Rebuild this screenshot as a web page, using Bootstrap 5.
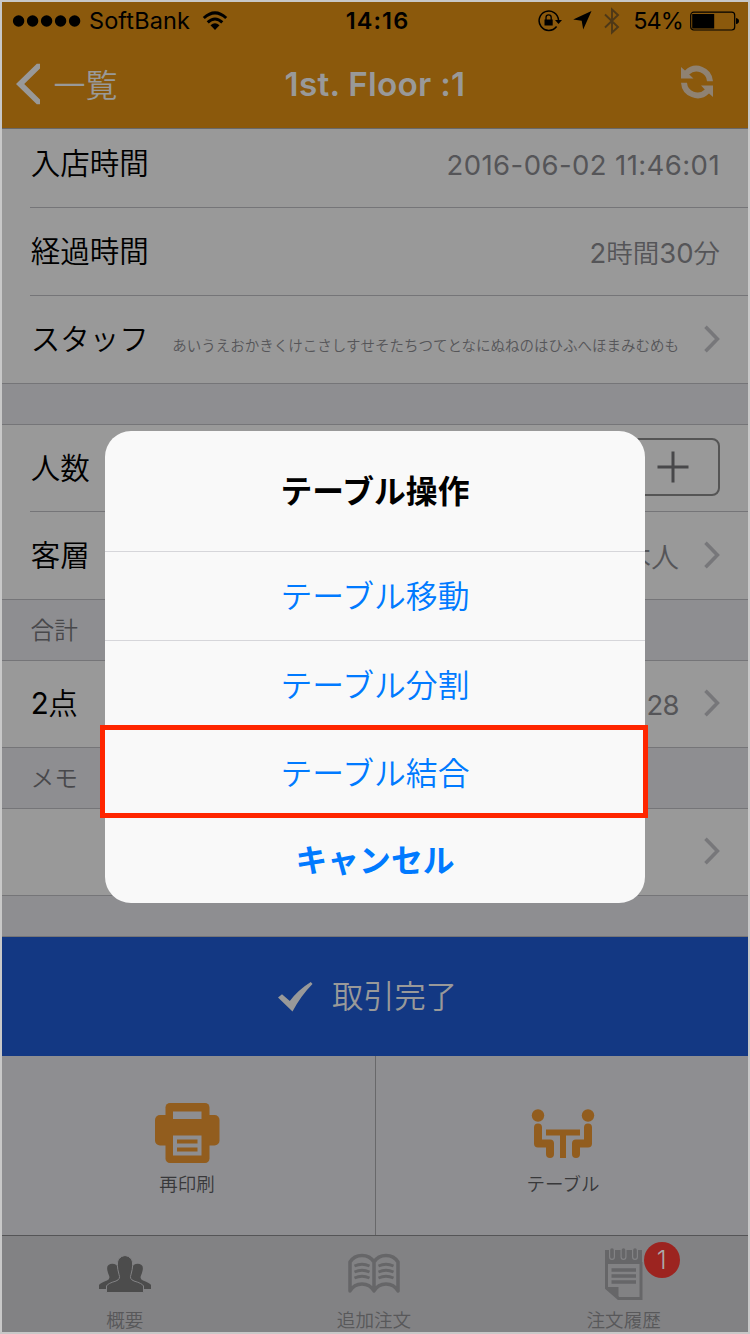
<!DOCTYPE html>
<html lang="ja">
<head>
<meta charset="utf-8">
<meta name="viewport" content="width=device-width, initial-scale=1">
<title>1st. Floor :1</title>
<link href="https://cdn.jsdelivr.net/npm/bootstrap@5.3.0/dist/css/bootstrap.min.css" rel="stylesheet">
<style>
  body { font-family: Inter, "Noto Sans CJK JP", sans-serif; font-weight: 400; line-height: 1; color: #000; background: #999; }
  .phone { width: 750px; height: 1334px; border: 2px solid #c8c8c8; background: #8e8e91; }
  svg { display: block; flex: none; }
  .jp { font-family: "Noto Sans CJK JP DemiLight", "Noto Sans CJK JP", sans-serif; font-weight: 350; }
  .topbar { height: 127px; background: #8b590c; border-bottom: 1px solid #68686a; }
  .tri { display: grid; grid-template-columns: 1fr auto 1fr; align-items: center; }
  .status { height: 37px; font-size: 24px; }
  .carrier { margin-left: 8px; font-size: 23.5px; letter-spacing: .1px; }
  .clock { font-weight: 600; font-size: 23.5px; letter-spacing: 1.1px; padding-left: 5px; }
  .titlebar { height: 89px; color: #999; }
  .backtext { font-size: 32px; margin-left: 12.5px; padding-bottom: 1px; }
  .screen-title { font-size: 33.3px; font-weight: 600; letter-spacing: .25px; padding-top: 2px; }
  .cells { background: #999; border-bottom: 1px solid #757578; }
  .cell { height: 88px; margin-left: 28px; padding-right: 28px; border-bottom: 1px solid #757578; }
  .cell:last-child { height: 87px; border-bottom: 0; }
  .cell.first { height: 79px; padding-bottom: 9px; }
  .cells-b .cell:first-child { height: 87px; }
  .lbl { font-size: 29.5px; padding-bottom: 3px; margin-left: .7px; }
  .val { font-size: 27.5px; color: #555558; padding-top: 3px; }
  .val.stamp { letter-spacing: .42px; padding-top: 5px; }
  .val .jp { font-size: 26.5px; }
  .val .who { font-size: 28px; }
  .staff { font-size: 14.5px; padding-top: 11px; margin-left: auto; }
  .chev { margin-left: 25px; margin-bottom: 2px; }
  .gap-row { height: 41px; border-bottom: 1px solid #757578; }
  .head-row { height: 61px; padding-left: 28.5px; font-size: 23.7px; color: #48484b; border-bottom: 1px solid #757578; }
  .stepper { width: 188px; height: 58px; border: 2px solid #555; border-radius: 8px; margin-top: -3px; }
  .complete { height: 119px; background: #133883; color: #999; font-size: 31.3px; padding-right: 15px; }
  .complete span { padding-bottom: 3px; }
  .tools { height: 180px; border-bottom: 1px solid #555557; }
  .tool { font-size: 18.5px; color: #38383a; padding-top: 47px; }
  .tool:first-child { padding-right: 3px; }
  .tool + .tool { border-left: 1px solid #68686a; padding-left: 2px; }
  .tool span { margin-top: 10px; }
  .tabs { height: 96px; background: #828284; font-size: 18.6px; color: #58585a; }
  .tab-item { padding-top: 12px; }
  .tab-item:first-child { padding-right: 3px; }
  .tab-item:nth-child(2) { padding-right: 2px; }
  .tab-item svg { height: 52px; }
  .tab-item > span { margin-top: 10px; }
  .count { position: absolute; left: 39px; top: -6px; width: 36px; height: 36px; border-radius: 50%; background: #9c2420; color: #aaa; font: 300 25px/36px Inter, sans-serif; text-align: center; }
  .dialog { position: absolute; left: 105px; top: 431px; width: 540px; height: 472px; border-radius: 26px; background: #f9f9f9; font-size: 31.8px; color: #007aff; }
  .dialog > div { height: 88px; flex: none; padding-bottom: 2px; }
  .dialog .dlg-title { height: 121px; color: #000; font-weight: 700; border-bottom: 1px solid #d6d6da; }
  .dialog .ruled { height: 89px; border-bottom: 1px solid #d6d6da; }
  .dialog .strong { font-family: "Noto Sans CJK JP", sans-serif; font-weight: 700; }
  .dialog .cancel { height: 86px; }
  .marker { position: absolute; left: -5px; top: 294px; width: 548px; border: 5.5px solid #ff2600; }
  .dialog > .marker { height: 93px; }
</style>
</head>
<body>
<svg width="0" height="0" class="position-absolute">
  <symbol id="chev" viewBox="0 0 16 28"><path d="M1.5 1.8 13.4 14 1.5 26.2" fill="none" stroke="#77777a" stroke-width="3.6"/></symbol>
</svg>
<div class="phone position-relative overflow-hidden">
  <header class="topbar">
    <div class="status tri">
      <div class="d-flex align-items-center">
        <svg width="71" height="12" class="ms-2" viewBox="-3 0 71 12"><circle cx="5.6" cy="6" r="5.7"/><circle cx="19.6" cy="6" r="5.7"/><circle cx="33.6" cy="6" r="5.7"/><circle cx="47.6" cy="6" r="5.7"/><circle cx="61.6" cy="6" r="5.7"/></svg>
        <span class="carrier">SoftBank</span>
        <svg width="26" height="20" viewBox="0 0 26 20" style="margin-left:12px"><g fill="none" stroke="#000" stroke-width="3"><path d="M1.8 7Q13-3.2 24.2 7"/><path d="M5.7 11.4Q13 4.6 20.3 11.4"/></g><path d="M8.5 14.3Q13 10.2 17.5 14.3L13 19Z"/></svg>
      </div>
      <span class="clock">14:16</span>
      <div class="d-flex align-items-center justify-content-end">
        <svg width="24" height="22" viewBox="0 0 24 22"><path d="M18.6 16.500A9.700 9.700 0 1 1 20.500 10" fill="none" stroke="#000" stroke-width="1.500"/><path d="M17 10h7l-3.500 4Z"/><path d="M6.500 9.500h8.200v6H6.500Z"/><path d="M8 10V7.500a2.600 2.600 0 0 1 5.200 0V10" fill="none" stroke="#000" stroke-width="1.300"/></svg>
        <svg width="19" height="19" viewBox="0 0 19 19" style="margin-left:11px"><path d="M18.500 0 .2 8.500l8.500 1.300 1.500 8.700Z"/></svg>
        <svg width="16" height="28" viewBox="0 0 16 28" style="margin-left:12px"><path d="M1 7.500 14 20 8 25.500V2.500L14 8 1 20.500" fill="none" stroke="#4e3817" stroke-width="1.900"/></svg>
        <span style="margin-left:13px;font-size:23.500px;letter-spacing:-.9px">54%</span>
        <svg width="49" height="20" viewBox="0 0 49 20" style="margin:0 9px 0 7px"><rect x=".7" y="1.200" width="44" height="17.800" rx="3" fill="none" stroke="#000" stroke-width="1.200"/><path d="M2.200 3h22v14.500h-22ZM46 7q3 .5 3 3t-3 3Z"/></svg>
      </div>
    </div>
    <div class="titlebar tri">
      <div class="d-flex align-items-center">
        <svg width="25" height="42" viewBox="0 0 25 42" style="margin-left:14px"><path d="M24 .8v4.600L8.200 21 24 36.600v4.600h-3.200L0 21 20.800.8Z" fill="#999"/></svg>
        <span class="jp backtext">一覧</span>
      </div>
      <span class="screen-title">1st. Floor :1</span>
      <svg class="ms-auto" width="34" height="34" viewBox="0 0 34 34" style="margin-right:34px;margin-bottom:4px" fill="#8f8272"><path d="M1 2 5 5.500A16.500 16.500 0 0 1 33 16.200h-6A10.500 10.500 0 0 0 9.200 9.500L13.500 13.500H1Z"/><path d="M33 32 29 28.500A16.500 16.500 0 0 1 1 17.800h6A10.500 10.500 0 0 0 24.800 24.500L21 20.500H33Z"/></svg>
    </div>
  </header>

  <section class="cells">
    <div class="cell first d-flex justify-content-between align-items-center"><span class="jp lbl">入店時間</span><span class="val stamp">2016-06-02 11:46:01</span></div>
    <div class="cell d-flex justify-content-between align-items-center"><span class="jp lbl">経過時間</span><span class="val">2<span class="jp">時間</span>30<span class="jp">分</span></span></div>
    <div class="cell d-flex align-items-center"><span class="jp lbl">スタッフ</span><span class="jp val staff">あいうえおかきくけこさしすせそたちつてとなにぬねのはひふへほまみむめも</span><svg class="chev" width="16" height="28"><use href="#chev"/></svg></div>
  </section>
  <div class="gap-row"></div>
  <section class="cells cells-b">
    <div class="cell d-flex justify-content-between align-items-center"><span class="jp lbl">人数</span>
      <div class="stepper d-flex justify-content-end align-items-center"><svg width="32" height="32" viewBox="0 0 32 32" style="margin-right:29.500px"><path d="M.5 16h31M16 .5v31" stroke="#48484a" stroke-width="3"/></svg></div></div>
    <div class="cell d-flex align-items-center"><span class="jp lbl">客層</span><span class="val ms-auto"><span class="jp who">本人</span></span><svg class="chev" width="16" height="28"><use href="#chev"/></svg></div>
  </section>
  <div class="head-row jp d-flex align-items-center">合計</div>
  <section class="cells">
    <div class="cell d-flex align-items-center" style="height:86px"><span class="lbl" style="letter-spacing:-.5px">2<span class="jp">点</span></span><span class="val ms-auto" style="letter-spacing:-.6px">28</span><svg class="chev" width="16" height="28"><use href="#chev"/></svg></div>
  </section>
  <div class="head-row jp d-flex align-items-center">メモ</div>
  <section class="cells">
    <div class="cell d-flex align-items-center justify-content-end" style="height:86px"><svg class="chev" width="16" height="28"><use href="#chev"/></svg></div>
  </section>
  <div class="gap-row"></div>
  <div class="complete jp d-flex align-items-center justify-content-center">
    <svg width="35" height="30" viewBox="0 0 35 30" style="margin-right:19px"><path d="M0 15.500 4 12.200 11.800 19Q20 8 32.800 0L34.500 2Q23 13.500 14.500 29.500Z" fill="#999"/></svg><span>取引完了</span>
  </div>
  <div class="tools d-flex jp">
    <div class="tool w-50 d-flex flex-column align-items-center">
      <svg width="65" height="61" viewBox="0 0 65 61"><g fill="#925d1e"><rect x="10.500" width="44" height="60" rx="4.500"/><rect y="12" width="64.500" height="30.500" rx="5"/></g><path d="M18 8.500h28.500v7.500H18ZM18 32.500h28.500V52.500H18Z" fill="#8e8e91"/><path d="M22 38.500h20.500M22 46.500h20.500" stroke="#925d1e" stroke-width="4"/></svg>
      <span>再印刷</span>
    </div>
    <div class="tool w-50 d-flex flex-column align-items-center">
      <svg width="64" height="61" viewBox="0 0 64 61"><g fill="#925d1e"><circle cx="7" cy="12.500" r="6.200"/><circle cx="57" cy="12.500" r="6.200"/><path d="M15 26.500h34v6H35V55h-6V32.500H15Z"/></g><g fill="none" stroke="#925d1e" stroke-width="8" stroke-linecap="round" stroke-linejoin="round"><path d="M7 24.500V40.500H19V51"/><path d="M57 24.500V40.500H45V51"/></g></svg>
      <span>テーブル</span>
    </div>
  </div>
  <nav class="tabs jp row row-cols-3 g-0">
    <div class="tab-item d-flex flex-column align-items-center">
      <svg width="52" viewBox="0 0 52 52" fill="#4c4c4c"><path d="M0 41V37Q1 35 8 32.500 11.500 31 10 27.500 6.500 19 9.500 17 13 14.500 17.500 17L22 30 12 36 7.500 41Z"/><path d="M52 41V37Q51 35 44 32.500 40.500 31 42 27.500 45.500 19 42.500 17 39 14.500 34.500 17L30 30 40 36 44.500 41Z"/><path d="M7.500 44.500V38Q8.500 35.500 17 33 22 31 20 26.500 17 16 19.500 11 26 4 32.500 11 35 16 32 26.500 30 31 35 33 43.500 35.500 44.500 38V44.500Z" stroke="#828284" stroke-width="1"/></svg>
      <span>概要</span>
    </div>
    <div class="tab-item d-flex flex-column align-items-center">
      <svg width="52" viewBox="0 0 52 52" fill="none" stroke="#666668" stroke-width="3.500"><path d="M26 14Q22 7.500 14 7.500 6 7.500 2 14V43Q6 36 14 36 22 36 26 43 30 36 38 36 46 36 50 43V14Q46 7.500 38 7.500 30 7.500 26 14V43" stroke-linejoin="round"/><path d="M6.500 20.500Q14 17 21.500 20.500M6.500 26.500Q14 23 21.500 26.500M6.500 32.500Q14 29 21.500 32.500M30.500 20.500Q38 17 45.500 20.500M30.500 26.500Q38 23 45.500 26.500M30.500 32.500Q38 29 45.500 32.500" transform="translate(0 -2.500)" stroke-width="2.800"/></svg>
      <span>追加注文</span>
    </div>
    <div class="tab-item d-flex flex-column align-items-center">
      <div class="position-relative">
        <svg width="38" viewBox="0 0 38 52"><path d="M1.500 14V40L13.500 50.500H36V14" fill="none" stroke="#666668" stroke-width="3"/><path d="M0 2h37v14H0ZM0 39H13.500V51Z" fill="#666668"/><g fill="none" stroke="#828284" stroke-width="6" stroke-linecap="round"><path d="M7 0V9M18.500 0V9M30 0V9"/></g><g stroke="#666668" fill="none"><path d="M7 2V9M18.500 2V9M30 2V9" stroke-width="3.600" stroke-linecap="round"/><path d="M6.500 22H31M6.500 28H31M6.500 34H31" stroke-width="3.400"/></g></svg>
        <span class="count">1</span>
      </div>
      <span>注文履歴</span>
    </div>
  </nav>
</div>
<div class="dialog jp d-flex flex-column text-center">
  <div class="dlg-title strong d-flex align-items-center justify-content-center">テーブル操作</div>
  <div class="ruled d-flex align-items-center justify-content-center">テーブル移動</div>
  <div class="d-flex align-items-center justify-content-center">テーブル分割</div>
  <div class="d-flex align-items-center justify-content-center">テーブル結合</div>
  <div class="cancel strong d-flex align-items-center justify-content-center">キャンセル</div>
  <div class="marker"></div>
</div>
<script src="https://cdn.jsdelivr.net/npm/bootstrap@5.3.0/dist/js/bootstrap.bundle.min.js"></script>
</body>
</html>
